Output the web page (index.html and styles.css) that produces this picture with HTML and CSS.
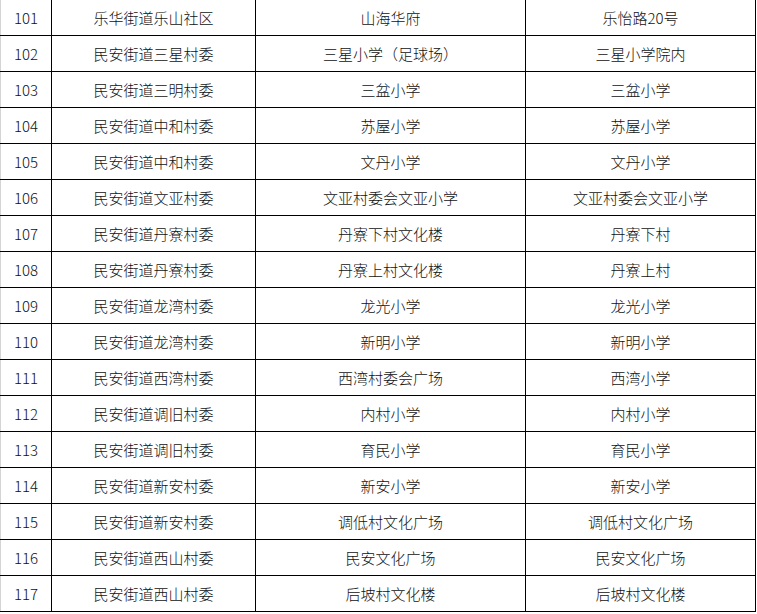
FILE: index.html
```html
<!DOCTYPE html>
<html lang="zh-CN">
<head>
<meta charset="utf-8">
<title>表格</title>
<link rel="stylesheet" href="styles.css">
</head>
<body>
<table class="sites">
  <colgroup>
    <col class="c-no">
    <col class="c-org">
    <col class="c-place">
    <col class="c-addr">
  </colgroup>
  <tbody>
    <tr><td>101</td><td>乐华街道乐山社区</td><td>山海华府</td><td>乐怡路20号</td></tr>
    <tr><td>102</td><td>民安街道三星村委</td><td>三星小学（足球场）</td><td>三星小学院内</td></tr>
    <tr><td>103</td><td>民安街道三明村委</td><td>三盆小学</td><td>三盆小学</td></tr>
    <tr><td>104</td><td>民安街道中和村委</td><td>苏屋小学</td><td>苏屋小学</td></tr>
    <tr><td>105</td><td>民安街道中和村委</td><td>文丹小学</td><td>文丹小学</td></tr>
    <tr><td>106</td><td>民安街道文亚村委</td><td>文亚村委会文亚小学</td><td>文亚村委会文亚小学</td></tr>
    <tr><td>107</td><td>民安街道丹寮村委</td><td>丹寮下村文化楼</td><td>丹寮下村</td></tr>
    <tr><td>108</td><td>民安街道丹寮村委</td><td>丹寮上村文化楼</td><td>丹寮上村</td></tr>
    <tr><td>109</td><td>民安街道龙湾村委</td><td>龙光小学</td><td>龙光小学</td></tr>
    <tr><td>110</td><td>民安街道龙湾村委</td><td>新明小学</td><td>新明小学</td></tr>
    <tr><td>111</td><td>民安街道西湾村委</td><td>西湾村委会广场</td><td>西湾小学</td></tr>
    <tr><td>112</td><td>民安街道调旧村委</td><td>内村小学</td><td>内村小学</td></tr>
    <tr><td>113</td><td>民安街道调旧村委</td><td>育民小学</td><td>育民小学</td></tr>
    <tr><td>114</td><td>民安街道新安村委</td><td>新安小学</td><td>新安小学</td></tr>
    <tr><td>115</td><td>民安街道新安村委</td><td>调低村文化广场</td><td>调低村文化广场</td></tr>
    <tr><td>116</td><td>民安街道西山村委</td><td>民安文化广场</td><td>民安文化广场</td></tr>
    <tr><td>117</td><td>民安街道西山村委</td><td>后坡村文化楼</td><td>后坡村文化楼</td></tr>
  </tbody>
</table>
</body>
</html>
```
FILE: styles.css
```css
html, body {
  margin: 0;
  padding: 0;
  background: #ffffff;
}

body {
  font-family: "Noto Sans CJK SC", "Liberation Sans", sans-serif;
  font-size: 15px;
  font-weight: 300;
  color: #111111;
}

.sites {
  border-collapse: collapse;
  table-layout: fixed;
  width: 755px;
  margin-top: -1px;
}

.c-no { width: 51px; }
.c-org { width: 204px; }
.c-place { width: 270px; }
.c-addr { width: 230px; }

.sites td {
  height: 35px;
  padding: 0;
  border: 1px solid #000000;
  text-align: center;
  vertical-align: middle;
  line-height: 20px;
  white-space: nowrap;
}

.sites td:first-child {
  border-left-color: #d4d4d4;
}

.sites .num {
  font-family: "DejaVu Sans", sans-serif;
}
```
